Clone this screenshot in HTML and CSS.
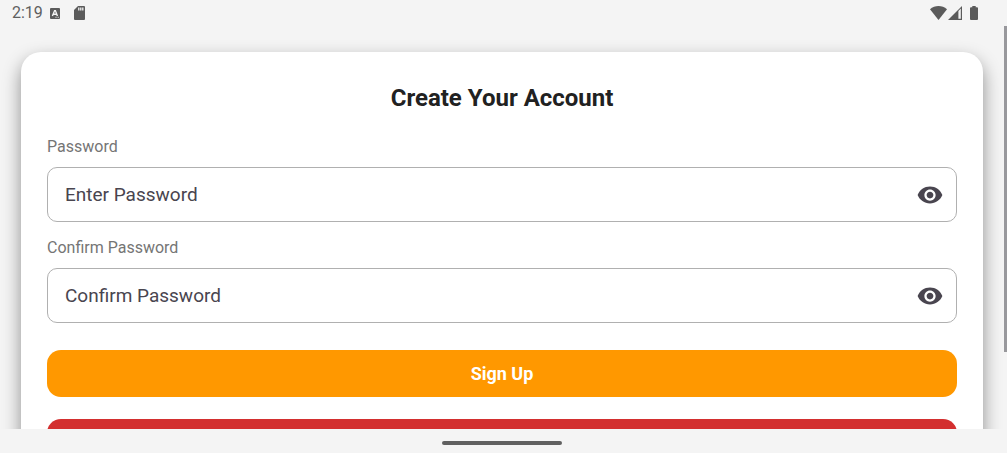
FILE: index.html
```html
<!DOCTYPE html>
<html lang="en">
<head>
<meta charset="utf-8">
<meta name="viewport" content="width=device-width, initial-scale=1">
<title>Create Your Account</title>
<link rel="stylesheet" href="styles.css">
</head>
<body>
<div class="screen">
  <header class="status-bar">
    <div class="status-left">
      <span class="clock">2:19</span>
      <svg class="icon-app" viewBox="0 0 10 11" aria-hidden="true"><rect width="10" height="11" rx="1" fill="#5b5b5b"/><path d="M2.4 8 4.6 2.6h.8L7.4 8M3.3 6.2h3.2" fill="none" stroke="#f4f4f4" stroke-width="1.4"/><path d="M5.5 9.3h1M7.7 9.3h1" stroke="#f4f4f4" stroke-width="1"/></svg>
      <svg class="icon-sd" viewBox="0 0 11 14" aria-hidden="true"><path d="M4 0h6a1 1 0 0 1 1 1v12a1 1 0 0 1-1 1H1a1 1 0 0 1-1-1V4z" fill="#5b5b5b"/><path d="M4.8 1.6v2.8M6.8 1.6v2.8M8.8 1.6v2.8" stroke="#f4f4f4" stroke-width="1.3"/></svg>
    </div>
    <div class="status-right">
      <svg class="icon-wifi" viewBox="0 0 17 14" aria-hidden="true"><path d="M0 3.3C4.8-1.1 12.2-1.1 17 3.3L8.5 14z" fill="#5b5b5b"/></svg>
      <svg class="icon-signal" viewBox="0 0 14 14" aria-hidden="true"><path d="M14 0v14H0z" fill="#5b5b5b"/><path d="M10.4 5 12.8 2.6v10.2h-2.4z" fill="#f4f4f4"/></svg>
      <svg class="icon-battery" viewBox="0 0 8 14" aria-hidden="true"><path d="M2.3 0h3.4v1.3H7a1 1 0 0 1 1 1V13a1 1 0 0 1-1 1H1a1 1 0 0 1-1-1V2.3a1 1 0 0 1 1-1h1.3z" fill="#5b5b5b"/></svg>
    </div>
  </header>
  <main class="content">
    <form class="card">
      <h1 class="title">Create Your Account</h1>
      <label class="label" for="password">Password</label>
      <div class="field">
        <input class="input" id="password" type="password" placeholder="Enter Password">
        <button class="toggle" type="button" aria-label="Show password">
          <svg class="icon-eye" viewBox="1 4 22 16" aria-hidden="true"><path d="M12 4.5C7 4.5 2.73 7.61 1 12c1.73 4.39 6 7.5 11 7.5s9.27-3.11 11-7.5c-1.73-4.39-6-7.5-11-7.5zM12 17c-2.76 0-5-2.24-5-5s2.24-5 5-5 5 2.24 5 5-2.24 5-5 5zm0-8c-1.66 0-3 1.34-3 3s1.34 3 3 3 3-1.34 3-3-1.34-3-3-3z" fill="#49454f"/></svg>
        </button>
      </div>
      <label class="label" for="confirm">Confirm Password</label>
      <div class="field">
        <input class="input" id="confirm" type="password" placeholder="Confirm Password">
        <button class="toggle" type="button" aria-label="Show confirmed password">
          <svg class="icon-eye" viewBox="1 4 22 16" aria-hidden="true"><path d="M12 4.5C7 4.5 2.73 7.61 1 12c1.73 4.39 6 7.5 11 7.5s9.27-3.11 11-7.5c-1.73-4.39-6-7.5-11-7.5zM12 17c-2.76 0-5-2.24-5-5s2.24-5 5-5 5 2.24 5 5-2.24 5-5 5zm0-8c-1.66 0-3 1.34-3 3s1.34 3 3 3 3-1.34 3-3-1.34-3-3-3z" fill="#49454f"/></svg>
        </button>
      </div>
      <div class="actions">
        <button class="btn btn-primary" type="submit">Sign Up</button>
        <button class="btn btn-danger" type="button"></button>
      </div>
    </form>
    <div class="scroll-thumb"></div>
  </main>
  <footer class="nav-bar"><div class="nav-handle"></div></footer>
</div>
</body>
</html>
```
FILE: styles.css
```css
* {
  box-sizing: border-box;
}

body {
  margin: 0;
  background: #f4f4f4;
  color: #212121;
  font-family: Roboto, "Liberation Sans", sans-serif;
}

svg {
  display: block;
}

.screen {
  display: flex;
  flex-direction: column;
  height: 100vh;
}

.status-bar {
  display: flex;
  flex: none;
  align-items: center;
  justify-content: space-between;
  height: 26px;
  padding: 0 29px 0 12px;
}

.status-left,
.status-right {
  display: flex;
  align-items: center;
}

.clock {
  margin-right: 7px;
  color: #5f5f5f;
  font-size: 16px;
  line-height: 24px;
}

.icon-app {
  width: 10px;
  height: 11px;
  margin-right: 14px;
}

.icon-sd {
  width: 11px;
  height: 14px;
}

.icon-wifi {
  width: 17px;
  height: 14px;
  margin-right: 1px;
}

.icon-signal {
  width: 14px;
  height: 14px;
  margin-right: 8px;
}

.icon-battery {
  width: 8px;
  height: 14px;
}

.content {
  position: relative;
  flex: 1;
  min-height: 0;
  padding: 26px 24px 0 21px;
  overflow: hidden;
}

.card {
  display: flex;
  flex-direction: column;
  padding: 26px;
  border-radius: 20px;
  background: #fff;
  box-shadow: 0 8px 18px rgba(0, 0, 0, 0.42);
}

.title {
  margin: 0 0 18px;
  font-size: 24px;
  font-weight: 700;
  line-height: 40px;
  text-align: center;
}

.label {
  margin-bottom: 9px;
  color: #757575;
  font-size: 16px;
  line-height: 22px;
}

.field {
  display: flex;
  align-items: center;
  height: 55px;
  margin-bottom: 15px;
  padding: 0 13px 0 17px;
  border: 1px solid #b0b0b0;
  border-radius: 10px;
}

.input {
  flex: 1;
  min-width: 0;
  padding: 0;
  border: 0;
  outline: 0;
  background: none;
  color: #49454f;
  font: 19px/26px Roboto, "Liberation Sans", sans-serif;
}

.input::placeholder {
  color: #49454f;
  opacity: 1;
}

.toggle {
  padding: 0;
  border: 0;
  background: none;
}

.icon-eye {
  width: 26px;
  height: 18px;
}

.actions {
  display: flex;
  flex-direction: column;
  gap: 22px;
  margin-top: 12px;
}

.btn {
  height: 47px;
  border: 0;
  border-radius: 14px;
  color: #fff;
  font: 700 18px/26px Roboto, "Liberation Sans", sans-serif;
}

.btn-primary {
  background: #ff9800;
}

.btn-danger {
  background: #d32f2f;
}

.scroll-thumb {
  position: absolute;
  top: 0;
  right: 0;
  width: 3px;
  height: 81%;
  background: #98989c;
}

.nav-bar {
  display: flex;
  flex: none;
  align-items: center;
  justify-content: center;
  height: 24px;
  padding: 4px 3px 0 0;
}

.nav-handle {
  width: 120px;
  height: 4px;
  border-radius: 2px;
  background: #606060;
}
```
